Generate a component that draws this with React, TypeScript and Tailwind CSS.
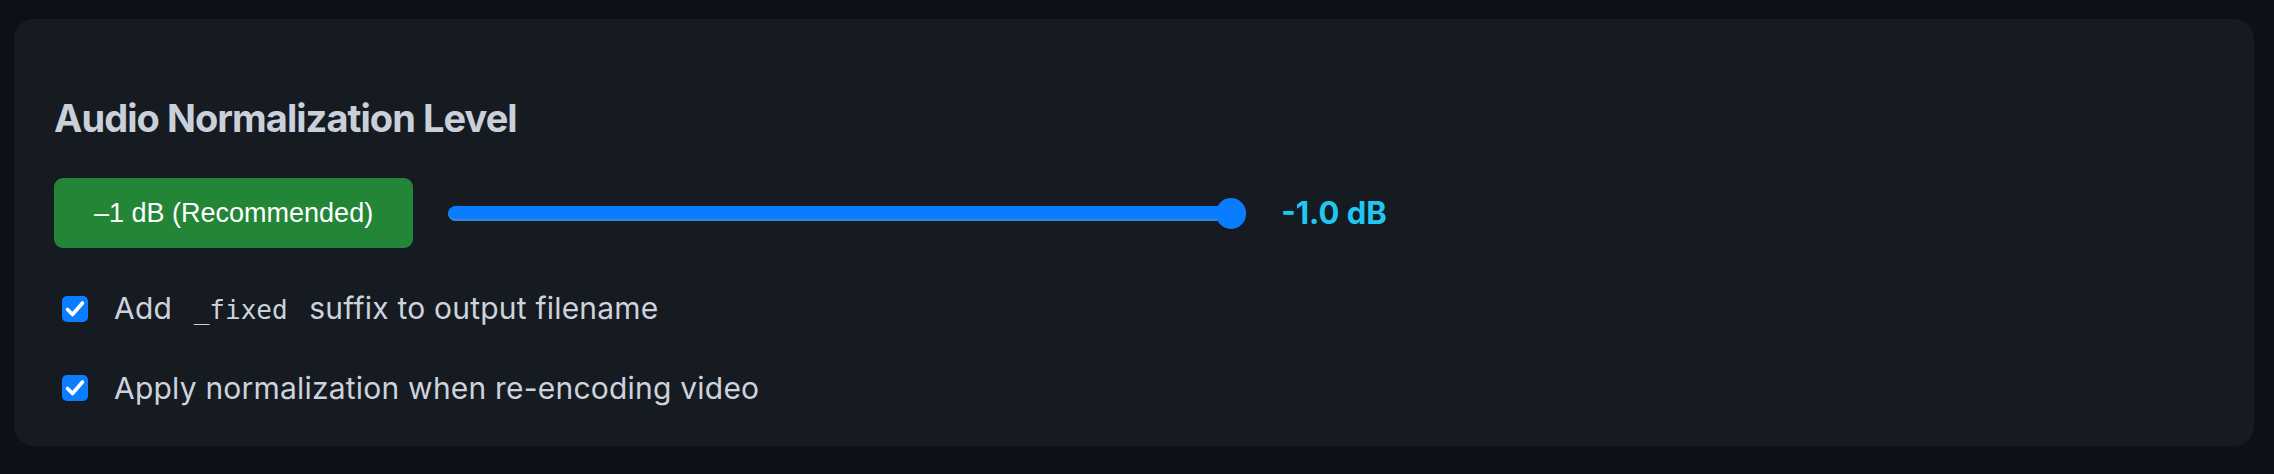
import React from 'react';

const CheckBox = () => (
    <span className="flex h-[26px] w-[26px] shrink-0 items-center justify-center rounded-[5px] bg-[#0b7dff]">
        <svg width="26" height="26" viewBox="0 0 26 26" fill="none">
            <path d="M5.5 13.5 L10.5 18.5 L20.5 7" stroke="#ffffff" strokeWidth="3.6" strokeLinecap="round" strokeLinejoin="round" />
        </svg>
    </span>
);

const App = () => {
    return (
        <div className="min-h-screen bg-[#0d1117] pt-[19px] pl-[14px] pr-[20px] pb-[30px] font-['Inter','Noto_Sans',sans-serif]">
            <div className="rounded-[20px] bg-[#161b22] pt-[76px] pb-[38px] pl-[40px] pr-[40px]">
                <h2 className="text-[38px] leading-[46px] font-bold tracking-[-0.025em] text-[#c9d0d9]">
                    Audio Normalization Level
                </h2>

                <div className="mt-[37px] flex h-[70px] items-center gap-[35px]">
                    <button className="flex h-[70px] items-center rounded-[9px] bg-[#238636] px-[40px] font-['Liberation_Sans',Arial,sans-serif] text-[27px] text-white">
                        –1 dB (Recommended)
                    </button>
                    <div className="relative flex h-[31px] w-[798px] items-center">
                        <div className="h-[15px] w-full rounded-full bg-[#0a7cff] pr-[15px] shadow-[inset_0_-2px_0_#3a86d0]" />
                        <div className="absolute right-0 top-0 h-[31px] w-[30px] rounded-full bg-[#0a7cff]" />
                    </div>
                    <span className="text-[31px] font-bold text-[#1fc8f2]">-1.0 dB</span>
                </div>

                <div className="mt-[40px] flex flex-col gap-[38px] pl-[8px] text-[30px] leading-[40px] tracking-[0.007em] text-[#cdd3dc]">
                    <label className="flex items-center gap-[26px]">
                        <CheckBox />
                        <span>
                            Add <code className="px-[13px] font-['DejaVu_Sans_Mono',monospace] text-[26px] tracking-normal">_fixed</code> suffix to output filename
                        </span>
                    </label>
                    <label className="flex items-center gap-[26px]">
                        <CheckBox />
                        <span>Apply normalization when re-encoding video</span>
                    </label>
                </div>
            </div>
        </div>
    );
};

export default App;
